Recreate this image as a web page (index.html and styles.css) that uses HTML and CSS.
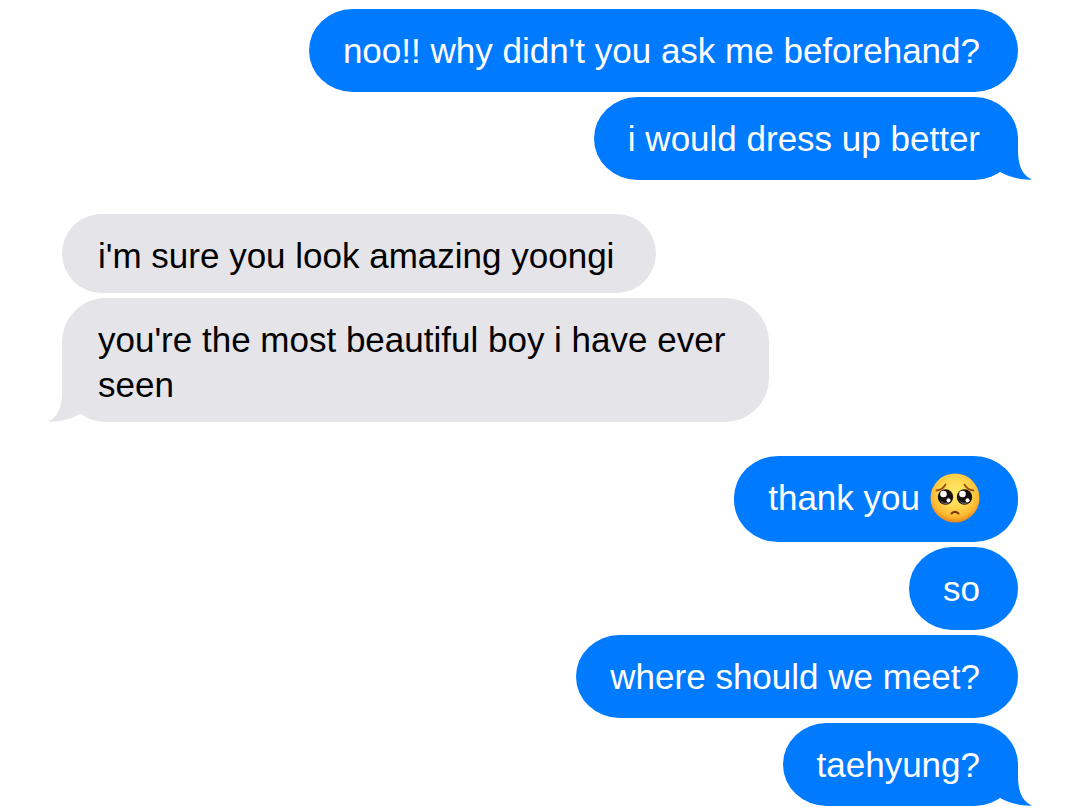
FILE: index.html
```html
<!DOCTYPE html>
<html lang="en">
<head>
<meta charset="utf-8">
<meta name="viewport" content="width=device-width, initial-scale=1">
<title>Messages</title>
<link rel="stylesheet" href="styles.css">
</head>
<body>
<svg class="defs" aria-hidden="true">
  <symbol id="tail" viewBox="0 0 58 44">
    <path d="M0 0H43V14C43 27 46 39 57 43.600C45 44 34 41 24 35.500L0 36Z"/>
  </symbol>
</svg>
<main class="thread">
  <section class="group sent">
    <p class="bubble">noo!! why didn't you ask me beforehand?</p>
    <p class="bubble last">i would dress up better<svg class="tail" aria-hidden="true"><use href="#tail"/></svg></p>
  </section>
  <section class="group received">
    <p class="bubble">i'm sure you look amazing yoongi</p>
    <p class="bubble last">you're the most beautiful boy i have ever seen<svg class="tail" aria-hidden="true"><use href="#tail"/></svg></p>
  </section>
  <section class="group sent">
    <p class="bubble with-emoji">thank you
      <svg class="emoji" viewBox="0 0 50 50" role="img" aria-label="pleading face">
        <defs>
          <radialGradient id="face" cx="50%" cy="40%" r="60%">
            <stop offset="0" stop-color="#ffe96a"/>
            <stop offset=".5" stop-color="#ffd850"/>
            <stop offset=".8" stop-color="#fdb932"/>
            <stop offset="1" stop-color="#e8861a"/>
          </radialGradient>
        </defs>
        <circle cx="25" cy="25" r="24.500" fill="url(#face)"/>
        <path d="M6.500 17.500Q12.500 17 15.500 11.500M43.500 17.500Q37.500 17 34.500 11.500" fill="none" stroke="#98500f" stroke-width="1.800" stroke-linecap="round"/>
        <g fill="#17100d">
          <circle cx="15.500" cy="24" r="7.700"/>
          <circle cx="34.500" cy="24" r="7.700"/>
        </g>
        <g fill="#766b68">
          <path d="M10 27Q15 33 21 27Q19 31 15.500 31Q12 31 10 27Z"/>
          <path d="M29 27Q34 33 40 27Q38 31 34.500 31Q31 31 29 27Z"/>
        </g>
        <g fill="#fff">
          <circle cx="13.500" cy="21" r="3.300"/>
          <circle cx="32.500" cy="21" r="3.300"/>
          <circle cx="18.500" cy="27.200" r="2"/>
          <circle cx="37.500" cy="27.200" r="2"/>
        </g>
        <path d="M21.500 40.500Q25 37.300 28.500 40.500" fill="none" stroke="#78380f" stroke-width="2" stroke-linecap="round"/>
      </svg></p>
    <p class="bubble">so</p>
    <p class="bubble">where should we meet?</p>
    <p class="bubble last">taehyung?<svg class="tail" aria-hidden="true"><use href="#tail"/></svg></p>
  </section>
</main>
</body>
</html>
```
FILE: styles.css
```css
* {
  box-sizing: border-box;
}

body {
  margin: 0;
  background: #fff;
  font-family: "Liberation Sans", Arial, sans-serif;
  font-size: 35px;
  line-height: 45px;
}

.defs {
  position: absolute;
  width: 0;
  height: 0;
}

.thread {
  display: flex;
  flex-direction: column;
  gap: 34px;
  padding: 9px 62px 6px;
  isolation: isolate;
}

.group {
  display: flex;
  flex-direction: column;
  gap: 5px;
}

.sent {
  align-items: flex-end;
}

.received {
  align-items: flex-start;
}

.bubble {
  position: relative;
  max-width: 76%;
  margin: 0;
}

.sent .bubble {
  padding: 19px 38px 19px 34px;
  border-radius: 44px / 42px;
  background: #007aff;
  color: #fff;
}

.received .bubble {
  padding: 19px 42px 15px 36px;
  border-radius: 44px;
  background: #e5e4e9;
  color: #000;
}

.received .last {
  max-width: 74%;
}

.tail {
  position: absolute;
  z-index: -1;
  right: -15px;
  bottom: 0;
  width: 58px;
  height: 44px;
  fill: #007aff;
}

.received .tail {
  right: auto;
  left: -15px;
  fill: #e5e4e9;
  transform: scaleX(-1);
}

.sent .with-emoji {
  display: flex;
  align-items: flex-start;
  gap: 10px;
}

.emoji {
  width: 50px;
  height: 50px;
  margin-top: -2px;
}
```
